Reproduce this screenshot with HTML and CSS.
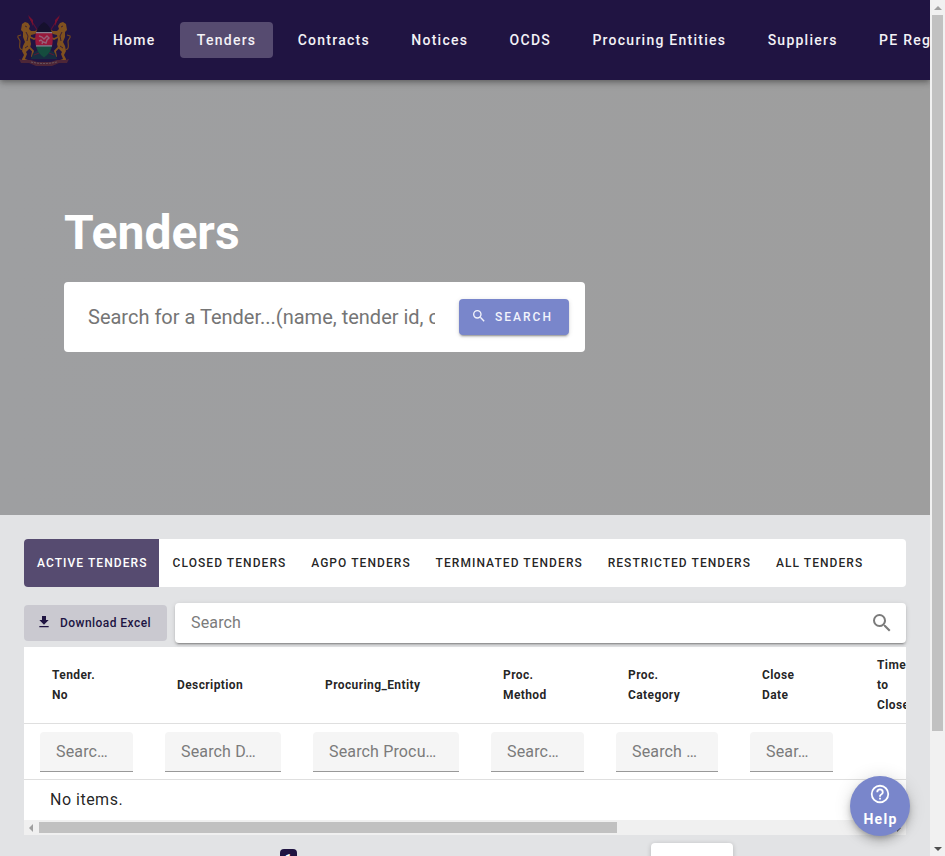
FILE: index.html
```html
<!DOCTYPE html>
<html lang="en">
<head>
<meta charset="utf-8">
<title>Tenders</title>
<link rel="stylesheet" href="styles.css">
</head>
<body>
<div class="shell">
  <div class="page">
    <header class="topbar">
      <svg class="crest" viewBox="0 0 56 52">
        <path fill="none" stroke="#5c1136" stroke-width="1.200" d="M13 3l14 22M43 3L29 25"/>
        <path fill="#761131" d="M12 1l5 5v6zM44 1l-5 5v6z"/>
        <g id="lion">
          <path fill="#80511f" d="M6 10l3-2 3 1 2 3-1 3 2 2 4 0 3-2 1 2-4 3-4 1-1 4 1 5-1 4-4 4 1 2-2 5 3 1v2H6l0-3 2-4-2-4 1-5 2-4-2-5 0-5-2-2z"/>
          <path fill="none" stroke="#80511f" stroke-width="1.800" d="M12 22l6 3 2-1M13 33l4 4-1 5 3 2"/>
          <path fill="none" stroke="#70451f" stroke-width="1.200" d="M7 36c-5-1-3-5-3-9-1-3-3-3-2-5l3-1"/>
          <path fill="none" stroke="#3a2036" stroke-width="1" d="M9 12l2 1M10 18l2 4-1 5M9 34l3-2"/>
        </g>
        <use href="#lion" transform="matrix(-1 0 0 1 56 0)"/>
        <path fill="#172c40" d="M17 39l5-3 6 5 6-5 5 3 2 6H15z"/>
        <path fill="none" stroke="#5a1935" stroke-width="1" d="M18 41l5-2M38 41l-5-2"/>
        <path fill="#15102d" d="M28 8c4.500 3 7 6.500 8 11H20c1-4.500 3.500-8 8-11z"/>
        <path fill="#98183b" d="M19.800 19h16.400c.7 4 .7 8 0 12.500H19.800c-.7-4.500-.7-8.500 0-12.500z"/>
        <path fill="#154c3e" d="M20 32h16c-1 5-4 9-8 11.500-4-2.500-7-6.500-8-11.500z"/>
        <path fill="none" stroke="#8b8193" stroke-width="1.200" d="M20 18.700h16M20 31.800h16"/>
        <path fill="none" stroke="#966078" stroke-width="1.400" d="M23 22l3 1 2 2 3-3 2 2-2 2-1 3-3-1-2-2-2 1M27 27l-1 3"/>
        <path fill="#4d2637" d="M3 45l4 1 8 0 6 2h14l6-2h8l4-1-2 4-8 0-7 3H20l-7-3-8 0z"/>
        <path fill="none" stroke="#6a5961" stroke-width="1" stroke-dasharray="2 1" d="M15 48q13 3 26 0"/>
      </svg>
      <nav class="nav">
        <a>Home</a><a class="current">Tenders</a><a>Contracts</a><a>Notices</a><a>OCDS</a><a>Procuring Entities</a><a>Suppliers</a><a>PE Registration</a>
      </nav>
    </header>
    <section class="hero">
      <h1>Tenders</h1>
      <div class="hero-search">
        <div class="hero-input">Search for a Tender...(name, tender id, category)</div>
        <button class="search-btn"><svg viewBox="0 0 24 24"><path d="M9.500 3A6.500 6.500 0 0 1 16 9.500c0 1.610-.59 3.090-1.560 4.230l.27.27h.79l5 5-1.500 1.500-5-5v-.79l-.27-.27A6.516 6.516 0 0 1 9.500 16a6.500 6.500 0 0 1 0-13m0 2C7 5 5 7 5 9.500S7 14 9.500 14 14 12 14 9.500 12 5 9.500 5z"/></svg>SEARCH</button>
      </div>
    </section>
    <main class="content">
      <div class="tabs">
        <span class="selected">ACTIVE TENDERS</span><span>CLOSED TENDERS</span><span>AGPO TENDERS</span><span>TERMINATED TENDERS</span><span>RESTRICTED TENDERS</span><span>ALL TENDERS</span>
      </div>
      <div class="tools">
        <button class="download"><svg viewBox="0 0 24 24"><path d="M5 20h14v-2H5m14-9h-4V3H9v6H5l7 7 7-7z"/></svg>Download Excel</button>
        <div class="filter"><span>Search</span><svg viewBox="0 0 24 24"><path d="M9.500 3A6.500 6.500 0 0 1 16 9.500c0 1.610-.59 3.090-1.560 4.230l.27.27h.79l5 5-1.500 1.500-5-5v-.79l-.27-.27A6.516 6.516 0 0 1 9.500 16a6.500 6.500 0 0 1 0-13m0 2C7 5 5 7 5 9.500S7 14 9.500 14 14 12 14 9.500 12 5 9.500 5z"/></svg></div>
      </div>
      <div class="table">
        <div class="row head">
          <div>Tender.<br>No</div><div>Description</div><div>Procuring_Entity</div><div>Proc.<br>Method</div><div>Proc.<br>Category</div><div>Close<br>Date</div><div>Time<br>to<br>Close</div>
        </div>
        <div class="row fields">
          <div><p>Searc…</p></div><div><p>Search D…</p></div><div><p>Search Procu…</p></div><div><p>Searc…</p></div><div><p>Search …</p></div><div><p>Sear…</p></div><div></div>
        </div>
        <div class="empty">No items.</div>
        <div class="hscroll"><i class="arrow-left"></i><i class="hthumb"></i><i class="arrow-right"></i></div>
      </div>
      <div class="pager"><span class="page-no">1</span><span class="page-size"></span></div>
    </main>
    <button class="help"><svg viewBox="0 0 24 24"><path d="M11 18h2v-2h-2v2m1-16A10 10 0 0 0 2 12a10 10 0 0 0 10 10 10 10 0 0 0 10-10A10 10 0 0 0 12 2m0 18c-4.410 0-8-3.590-8-8s3.590-8 8-8 8 3.590 8 8-3.590 8-8 8m0-14a4 4 0 0 0-4 4h2a2 2 0 0 1 2-2 2 2 0 0 1 2 2c0 2-3 1.750-3 5h2c0-2.250 3-2.500 3-5a4 4 0 0 0-4-4z"/></svg>Help</button>
  </div>
  <div class="vscroll"><i class="arrow-up"></i><i class="vthumb"></i><i class="arrow-down"></i></div>
</div>
</body>
</html>
```
FILE: styles.css
```css
* { box-sizing: border-box; }
body { margin: 0; overflow: hidden; font-family: Roboto, sans-serif; color: rgba(0,0,0,.87); }
button { font-family: inherit; border: 0; margin: 0; display: flex; align-items: center; }
svg { fill: currentColor; flex: none; }
.shell { display: grid; grid-template-columns: 930px 15px; height: 856px; overflow: hidden; }
.page { position: relative; height: 856px; overflow: hidden; background: #e2e3e5; }

.topbar { position: relative; z-index: 2; height: 80px; display: flex; align-items: center; background: #201442; box-shadow: 0 2px 4px -1px rgba(0,0,0,.2), 0 4px 5px rgba(0,0,0,.14), 0 1px 10px rgba(0,0,0,.12); }
.crest { width: 56px; height: 52px; margin: 0 24px 0 16px; }
.nav { display: flex; gap: 8px; flex: 1; min-width: 0; overflow: hidden; }
.nav a { flex: none; height: 36px; padding: 0 16.500px 0 16.900px; border-radius: 4px; color: #f3f1f6; font-size: 14px; font-weight: 500; letter-spacing: 1.250px; line-height: 36px; white-space: nowrap; }
.nav .current { background: #564b70; }

.hero { height: 435px; padding: 121px 64px 0; background: linear-gradient(90deg, #9e9fa1, #9e9e9e); }
.hero h1 { margin: 0 0 17px; color: #fff; font-size: 48px; font-weight: 700; line-height: 64px; }
.hero-search { width: 521px; height: 70px; display: flex; align-items: center; padding: 0 16px 0 24px; background: #fff; border-radius: 4px; }
.hero-input { width: 347px; margin-right: 24px; overflow: hidden; white-space: nowrap; font-size: 20px; line-height: 30px; color: #757575; }
.search-btn { width: 110px; height: 36px; padding: 0 12px; color: #f2f3fb; background: #7986cb; border-radius: 4px; font-size: 12px; font-weight: 500; letter-spacing: 2px; box-shadow: 0 3px 1px -2px rgba(0,0,0,.2), 0 2px 2px rgba(0,0,0,.14), 0 1px 5px rgba(0,0,0,.12); }
.search-btn svg { width: 16px; height: 16px; margin: -2px 8px 0 0; }

.content { padding: 24px 24px 0; }
.tabs { height: 48px; display: flex; overflow: hidden; background: #fff; border-radius: 4px; }
.tabs span { padding: 0 12.200px 0 12.600px; font-size: 12px; font-weight: 500; line-height: 48px; letter-spacing: 1.070px; white-space: nowrap; }
.tabs .selected { width: 135px; padding-left: 13px; margin-right: 1px; color: #fff; background: #564b70; }
.tools { display: flex; align-items: center; gap: 8px; height: 40px; margin: 16px 0 4px; }
.download { width: 143px; height: 36px; padding: 0 12px; color: #201442; background: #cac9d0; border-radius: 4px; font-size: 12px; font-weight: 500; letter-spacing: .45px; white-space: nowrap; }
.download svg { width: 16px; height: 16px; margin: -2px 8px 0 0; }
.filter { flex: 1; height: 40px; display: flex; align-items: center; justify-content: space-between; padding: 0 12px 0 16px; color: #7b7b7b; background: #fff; border-radius: 4px; font-size: 16px; letter-spacing: .15px; box-shadow: 0 3px 1px -2px rgba(0,0,0,.2), 0 2px 2px rgba(0,0,0,.14), 0 1px 5px rgba(0,0,0,.12); }
.filter span { line-height: 20px; }
.filter svg { width: 24px; height: 24px; }

.table { height: 188px; overflow: hidden; background: #fff; }
.row { display: grid; grid-template-columns: 125px 148px 178px 125px 134px 115px 90px; width: 915px; border-bottom: 1px solid #dfdfdf; }
.head { height: 77px; align-items: center; font-size: 12px; font-weight: 700; line-height: 20px; letter-spacing: .4px; }
.head div { padding-left: 28px; }
.fields { height: 56px; }
.fields div { padding: 8px 16px 0; }
.fields p { height: 40px; margin: 0; padding-left: 16px; color: #7b7b7b; background: #f5f5f5; border-bottom: 1px solid #999; border-radius: 4px 4px 0 0; font-size: 16px; letter-spacing: .15px; line-height: 39px; white-space: nowrap; }
.empty { height: 40px; padding-left: 26px; font-size: 16px; line-height: 39px; letter-spacing: .5px; }
.hscroll { height: 15px; display: flex; align-items: center; padding: 0 5px; background: #f0f0f0; }
.hthumb { width: 578px; height: 11px; margin-left: 6px; background: #c1c1c1; }
.arrow-left { border: 4px solid transparent; border-left: 0; border-right-color: #a0a0a0; }
.arrow-right { margin-left: auto; border: 4px solid transparent; border-right: 0; border-left-color: #505050; }

.pager { height: 36px; margin-top: 8px; display: flex; padding-left: 256px; }
.page-no { width: 17px; height: 24px; margin-top: 6px; color: #fff; background: #201442; border-radius: 4px; font-size: 12px; font-weight: 700; line-height: 20px; text-align: center; }
.page-size { width: 82px; height: 40px; margin-left: 354px; background: #fff; border-radius: 4px; box-shadow: 0 1px 5px rgba(0,0,0,.2); }

.help { position: absolute; z-index: 3; left: 850px; top: 776px; width: 60px; height: 60px; flex-direction: column; padding: 8px 0 0 1px; color: #fff; background: #7986cb; border-radius: 50%; font-size: 14px; font-weight: 700; letter-spacing: 1.250px; line-height: 22px; box-shadow: 0 3px 5px -1px rgba(0,0,0,.2), 0 6px 10px rgba(0,0,0,.14), 0 1px 18px rgba(0,0,0,.12); }
.help svg { width: 22px; height: 22px; margin: -1px 1px 3px 0; }

.vscroll { display: flex; flex-direction: column; align-items: center; padding: 6px 0 5px; background: #f1f1f1; }
.vthumb { width: 11px; height: 716px; margin-top: 5px; background: #c1c1c1; }
.arrow-up { border: 4px solid transparent; border-top: 0; border-bottom-color: #a0a0a0; }
.arrow-down { margin-top: auto; border: 4px solid transparent; border-bottom: 0; border-top-color: #505050; }
```
